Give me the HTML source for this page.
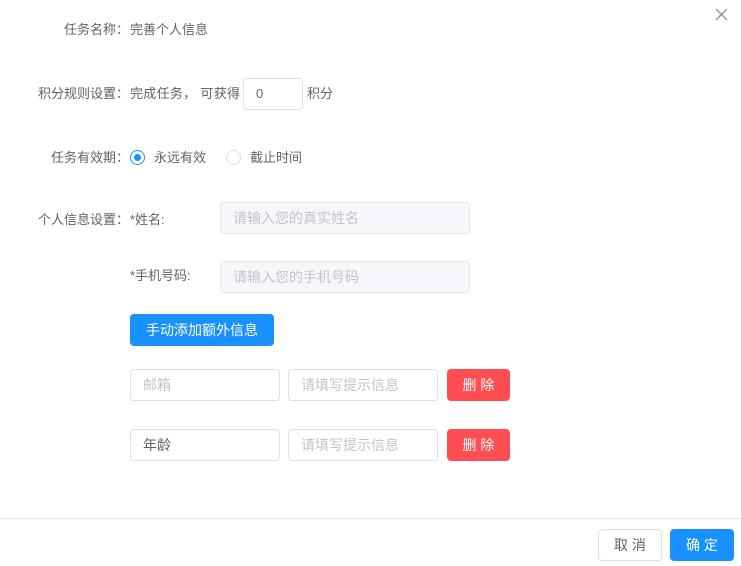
<!DOCTYPE html>
<html><head><meta charset="utf-8"><style>
*{box-sizing:border-box;margin:0;padding:0}
body{width:741px;height:566px;background:#fff;font-family:"Liberation Sans","Noto Sans CJK SC",sans-serif;font-size:13px;color:#606266;position:relative;overflow:hidden}
.a{position:absolute;white-space:nowrap;line-height:16px}
.lbl{right:612px;text-align:right;color:#606266}
.in{position:absolute;border:1px solid #dcdfe6;border-radius:4px;height:32px;line-height:30px;padding-left:12px;color:#c0c4cc;background:#fff;font-size:14px}
.dis{background:#f5f7fa;border-color:#e4e7ed}
.btn{position:absolute;border-radius:4px;height:32px;line-height:32px;text-align:center;color:#fff;font-size:14px}
</style></head><body>
<svg class="a" style="left:715px;top:8px" width="13" height="13" viewBox="0 0 13 13"><path d="M1 1L12 12M12 1L1 12" stroke="#909399" stroke-width="1.3"/></svg>
<div class="a lbl" style="top:22px">任务名称：</div>
<div class="a" style="left:130px;top:22px">完善个人信息</div>
<div class="a lbl" style="top:86px">积分规则设置：</div>
<div class="a" style="left:130px;top:86px;letter-spacing:0.3px">完成任务，&nbsp;可获得</div>
<div class="in" style="left:243px;top:78px;width:60px;color:#606266;font-size:13px">0</div>
<div class="a" style="left:307px;top:86px">积分</div>
<div class="a lbl" style="top:150px">任务有效期：</div>
<div class="a" style="left:130px;top:150px;width:15px;height:15px;border:1px solid #1890ff;border-radius:50%"><div style="width:7px;height:7px;background:#1890ff;border-radius:50%;margin:3px"></div></div>
<div class="a" style="left:154px;top:150px">永远有效</div>
<div class="a" style="left:226px;top:150px;width:15px;height:15px;border:1px solid #dcdfe6;border-radius:50%"></div>
<div class="a" style="left:250px;top:150px">截止时间</div>
<div class="a lbl" style="top:212px">个人信息设置：</div>
<div class="a" style="left:130px;top:212px">*姓名:</div>
<div class="in dis" style="left:220px;top:202px;width:250px">请输入您的真实姓名</div>
<div class="a" style="left:130px;top:268px">*手机号码:</div>
<div class="in dis" style="left:220px;top:261px;width:250px">请输入您的手机号码</div>
<div class="btn" style="left:130px;top:314px;width:144px;background:#1890ff">手动添加额外信息</div>
<div class="in" style="left:130px;top:369px;width:150px">邮箱</div>
<div class="in" style="left:288px;top:369px;width:150px">请填写提示信息</div>
<div class="btn" style="left:447px;top:369px;width:63px;background:#ff4d51">删 除</div>
<div class="in" style="left:130px;top:429px;width:150px;color:#606266">年龄</div>
<div class="in" style="left:288px;top:429px;width:150px">请填写提示信息</div>
<div class="btn" style="left:447px;top:429px;width:63px;background:#ff4d51">删 除</div>
<div class="a" style="left:0;top:518px;width:741px;height:1px;background:#e8e8e8"></div>
<div class="btn" style="left:598px;top:529px;width:64px;border:1px solid #dcdfe6;color:#606266;line-height:30px">取 消</div>
<div class="btn" style="left:670px;top:529px;width:64px;background:#1890ff">确 定</div>
</body></html>
